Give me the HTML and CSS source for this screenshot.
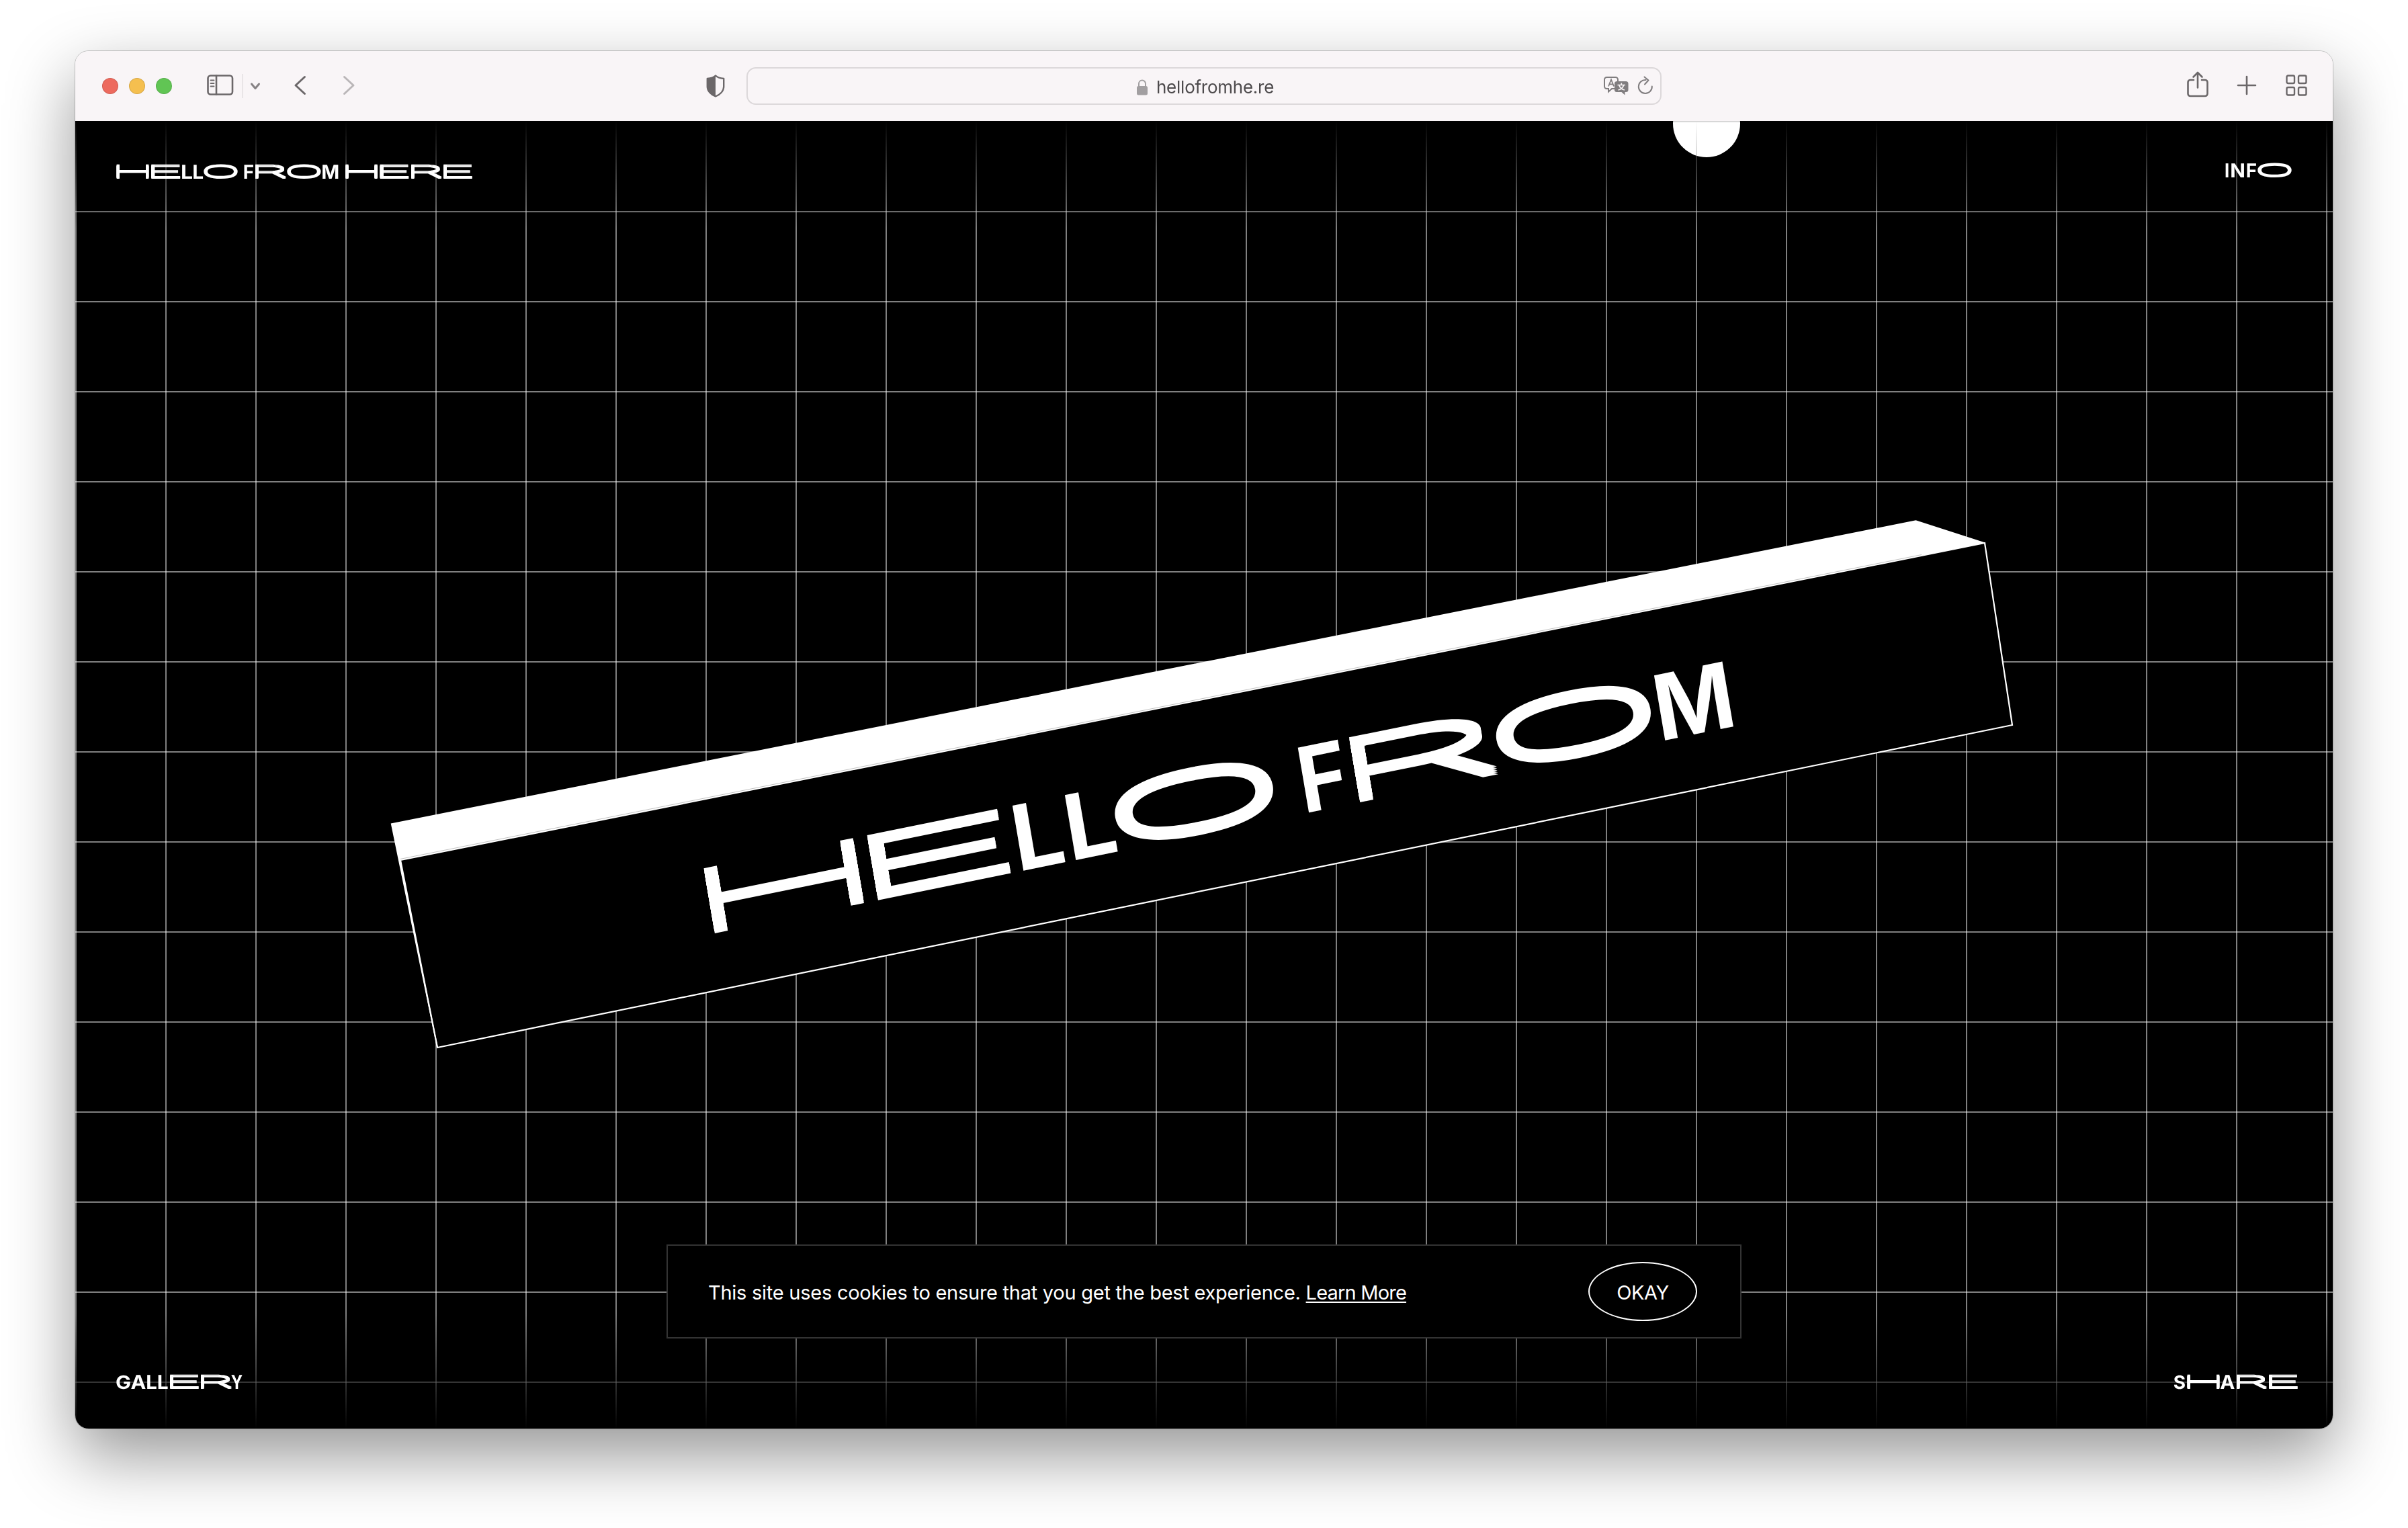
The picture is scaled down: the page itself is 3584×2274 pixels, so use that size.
FILE: index.html
```html
<!DOCTYPE html>
<html lang="en">
<head>
<meta charset="utf-8">
<title>Hello From Here</title>
<link rel="stylesheet" href="styles.css">
</head>
<body>
<div class="window">
  <header class="toolbar">
    <div class="lights"><i class="red"></i><i class="yellow"></i><i class="green"></i></div>
    <svg class="icon sidebar" width="40" height="32" viewBox="0 0 40 32"><rect x="1.5" y="1.5" width="36.5" height="28" rx="4"/><path d="M14 1.500V29.500"/><path class="thin" d="M5.500 8.500h5M5.500 13h5M5.500 17.500h5"/></svg>
    <span class="divider"></span>
    <svg class="icon chevron" width="16" height="12" viewBox="0 0 16 12"><path d="M2.500 3l5.500 6.500L13.500 3"/></svg>
    <svg class="icon back" width="20" height="32" viewBox="0 0 20 32"><path d="M16.500 3.500L3 16l13.500 12.500"/></svg>
    <svg class="icon forward" width="20" height="32" viewBox="0 0 20 32"><path d="M3.500 3.500L17 16 3.500 28.500"/></svg>
    <svg class="icon shield" width="28" height="34" viewBox="0 0 28 34"><path d="M14 1.500C17 4.500 21 5.500 26.200 6v12c0 6-5 11.500-12.200 14.500C6.800 29.500 1.800 24 1.800 18V6C7 5.500 11 4.500 14 1.500z"/><path class="solid" d="M14 1.500v31C6.800 29.500 1.800 24 1.800 18V6C7 5.500 11 4.500 14 1.500z"/></svg>
    <div class="address">
      <div class="site">
        <svg class="lock" width="16" height="24" viewBox="0 0 16 24"><rect x="0" y="10" width="16" height="13.500" rx="2.500" fill="#a29fa1"/><path d="M3 11V6.500a5 5 0 0 1 10 0V11" fill="none" stroke="#a29fa1" stroke-width="2"/></svg>
        <span class="url">hellofromhe.re</span>
      </div>
      <svg class="translate" width="38" height="30" viewBox="0 0 38 30"><path d="M16 19h-4l-5 4.500V19H4.500A3.500 3.500 0 0 1 1 15.500v-10A3.500 3.500 0 0 1 4.500 2h13A3.500 3.500 0 0 1 21 5.500V8" fill="none" stroke="#807d7f" stroke-width="2"/><path d="M7 15.500L11 5.500l4 10M8.300 12.300h5.400" fill="none" stroke="#807d7f" stroke-width="1.800"/><path d="M19 8h14a3.500 3.500 0 0 1 3.500 3.500v9A3.500 3.500 0 0 1 33 24h-1.500v4.500L26.500 24H19a3 3 0 0 1-3-3.500v-9A3.500 3.500 0 0 1 19 8z" fill="#807d7f"/><path d="M26.300 10.500v3M20.500 13.500h11.500M23 14c1 3.500 4 6 8 7M29.500 14c-1 3.500-4 6-8 7" fill="none" stroke="#f9f5f7" stroke-width="1.700"/></svg>
      <svg class="reload" width="24" height="28" viewBox="0 0 24 28"><path d="M12.500 6a10 10 0 1 0 9.300 9.500M10.500 1.500l6 5-5.500 6" fill="none" stroke="#807d7f" stroke-width="2" stroke-linecap="round" stroke-linejoin="round"/></svg>
    </div>
    <svg class="icon share" width="32" height="40" viewBox="0 0 32 40"><path d="M10 13H5a3.500 3.500 0 0 0-3.500 3.500v17A3.500 3.500 0 0 0 5 37h22a3.500 3.500 0 0 0 3.500-3.500v-17A3.500 3.500 0 0 0 27 13h-5M16 24.500V2.500M9.500 8.500L16 2l6.500 6.500"/></svg>
    <svg class="icon plus" width="30" height="30" viewBox="0 0 30 30"><path d="M15 2v26M2 15h26"/></svg>
    <svg class="icon tabs" width="32" height="32" viewBox="0 0 32 32"><rect x="1.500" y="1.500" width="11.500" height="11.500" rx="2"/><rect x="19" y="1.500" width="11.500" height="11.500" rx="2"/><rect x="1.500" y="19" width="11.500" height="11.500" rx="2"/><rect x="19" y="19" width="11.500" height="11.500" rx="2"/></svg>
  </header>

  <main class="page">
    <div class="grid"></div>
    <div class="cursor"></div>

    <svg class="scene" width="3360" height="1946" viewBox="112 180 3360 1946">
      <path d="M596 1280L2954 808 2995 1079 651 1559z" fill="#000"/>
      <path d="M581.700 1225.500L2851.500 774.300 2954.500 807.500 596 1280 652 1559.500 650 1558z" fill="#fff"/>
      <path d="M596 1280L2954 808 2995 1079 651 1559z" fill="none" stroke="#fff" stroke-width="2.200"/>
      <path d="M596 1278.400L2860 825.500" fill="none" stroke="#bbb" stroke-width=".9"/>
      <g class="word" data-cap="98.500" transform="matrix(1 -.203 .168 .99 1063.800 1389)">
        <text class="wide" data-x="0" data-w="221">H</text><text class="wide" data-x="242" data-w="200">E</text><text data-x="459" data-w="63">L</text><text data-x="537" data-w="63">L</text><text class="wide turned" data-x="602.500" data-w="237.500">O</text>
        <text data-x="884" data-w="60">F</text><text class="wide" data-x="960" data-w="206">R</text><text class="wide turned" data-x="1170" data-w="232">O</text><text data-x="1414" data-w="103">M</text>
      </g>
    </svg>

    <div class="row">
      <svg class="label" width="540" height="40" viewBox="172 236 540 40">
        <g class="word" data-cap="21" transform="translate(0 266)">
          <text class="wide" data-x="173.700" data-w="47.300">H</text><text class="wide" data-x="225" data-w="43.400">E</text><text data-x="271" data-w="15">L</text><text data-x="288" data-w="14">L</text><text class="wide turned" data-x="302.500" data-w="51">O</text>
          <text data-x="363.500" data-w="13.500">F</text><text class="wide" data-x="380" data-w="46">R</text><text class="wide turned" data-x="426.500" data-w="50.800">O</text><text data-x="480" data-w="23.500">M</text>
          <text class="wide" data-x="514.500" data-w="47">H</text><text class="wide" data-x="565.500" data-w="43">E</text><text class="wide" data-x="612" data-w="45.500">R</text><text class="wide" data-x="660" data-w="43">E</text>
        </g>
      </svg>
      <svg class="label" width="102" height="40" viewBox="3310 236 102 40">
        <g class="word" data-cap="21" transform="translate(0 264)">
          <text data-x="3312.500" data-w="4">I</text><text data-x="3321" data-w="19">N</text><text data-x="3344.500" data-w="13.500">F</text><text class="wide turned" data-x="3359.500" data-w="51">O</text>
        </g>
      </svg>
    </div>
    <div class="row">
      <svg class="label" width="192" height="40" viewBox="172 2036 192 40">
        <g class="word" data-cap="21" transform="translate(0 2067)">
          <text data-x="173" data-w="20.700">G</text><text data-x="195" data-w="22">A</text><text data-x="219" data-w="13.700">L</text><text data-x="235.700" data-w="14">L</text><text class="wide" data-x="253" data-w="43">E</text><text class="wide" data-x="299" data-w="46">R</text><text data-x="344" data-w="16.700">Y</text>
        </g>
      </svg>
      <svg class="label share-link" width="188" height="40" viewBox="3234 2036 188 40">
        <g class="word" data-cap="21" transform="translate(0 2067)">
          <text data-x="3235.700" data-w="16.600">S</text><text class="wide" data-x="3255.700" data-w="47.300">H</text><text data-x="3304.700" data-w="21.300">A</text><text class="wide" data-x="3329" data-w="45">R</text><text class="wide" data-x="3377" data-w="43">E</text>
        </g>
      </svg>
    </div>

    <div class="cookies">
      <p><span class="msg">This site uses cookies to ensure that you get the best experience.</span> <a>Learn More</a></p>
      <button>OKAY</button>
    </div>
  </main>
</div>
<script src="letters.js"></script>
</body>
</html>
```
FILE: letters.js
```js
// Fits the ink of each display letter to its column width and the cap height.
// Wide letters use a light weight, thickened up and down so their bars match the stems.
// The wide O is a narrow O turned on its side, which keeps its long edges flat.
const ctx = document.createElement('canvas').getContext('2d');
document.querySelectorAll('.word').forEach(word => {
  const cap = +word.dataset.cap;
  word.querySelectorAll('text').forEach(t => {
    const wide = t.classList.contains('wide');
    const turned = t.classList.contains('turned');
    const grow = wide && !turned ? cap * 0.06 : 0;
    const style = getComputedStyle(t);
    // Measured at ten times the drawn size, so that whole-pixel rounding is negligible.
    ctx.font = style.fontWeight + ' 1000px ' + style.fontFamily;
    const m = ctx.measureText(t.textContent);
    const l = -m.actualBoundingBoxLeft / 10, r = m.actualBoundingBoxRight / 10;
    const a = m.actualBoundingBoxAscent / 10, d = m.actualBoundingBoxDescent / 10;
    const x = +t.dataset.x, w = +t.dataset.w, h = turned ? cap * 1.06 : cap - 2 * grow;
    const cx = (l + r) / 2, cy = (d - a) / 2;
    const iw = turned ? a + d : r - l, ih = turned ? r - l : a + d;
    const sx = w / iw * (grow ? 1.042 : 1);
    t.setAttribute('transform',
      `translate(${x + w / 2} ${-cap / 2}) scale(${sx} ${h / ih}) ${turned ? 'rotate(90)' : ''} translate(${-cx} ${-cy})`);
    if (grow) {
      t.style.textShadow = [-1, -0.5, 0.5, 1]
        .map(k => `0 ${(k * grow * ih / h).toFixed(2)}px 0 #fff`).join(',');
    }
  });
});
```
FILE: styles.css
```css
* { box-sizing: border-box; }
body { margin: 0; width: 3584px; height: 2274px; padding: 76px 112px 0; background: #fff; overflow: hidden; font-family: Inter, "Liberation Sans", sans-serif; }
.window { width: 3360px; height: 2050px; border-radius: 20px; box-shadow: 0 0 0 1px rgba(0,0,0,.2), 0 40px 100px rgba(0,0,0,.42); display: flex; flex-direction: column; }

.toolbar { height: 104px; flex: none; display: flex; align-items: center; background: #f9f5f7; border-radius: 20px 20px 0 0; padding-left: 40px; }
.lights { display: flex; gap: 16px; width: 156px; }
.lights i { width: 24px; height: 24px; border-radius: 50%; border: 1px solid rgba(0,0,0,.12); }
.red { background: #ed6a5e; }
.yellow { background: #f5bf4f; }
.green { background: #61c554; }
.icon { flex: none; fill: none; stroke: #6b6769; stroke-width: 2.6; stroke-linecap: round; stroke-linejoin: round; }
.icon .thin { stroke-width: 1.8; }
.icon .solid { fill: #6b6769; stroke: none; }
.sidebar { margin-top: -2px; }
.divider { width: 2px; height: 36px; margin-left: 12px; background: #e9e5e7; }
.chevron { margin-left: 10px; stroke: #868284; stroke-width: 3; }
.back { margin-left: 49px; margin-top: -2px; stroke-width: 3; }
.forward { margin-left: 52px; margin-top: -2px; stroke: #bab6b8; stroke-width: 3; }
.shield { margin-left: 522px; stroke-width: 2.4; }
.address { display: flex; align-items: center; width: 1362px; height: 56px; margin-left: 32px; border: 2px solid #dcd8da; border-radius: 14px; }
.site { display: flex; align-items: center; margin-left: 579px; width: 695px; gap: 13px; padding-top: 3px; }
.url { font-size: 26px; line-height: 32px; color: #4d4a4c; letter-spacing: -.25px; }
.reload { margin-left: 12px; margin-top: -2px; }
.share { margin-left: 782px; margin-top: -4px; }
.plus { margin-left: 42px; margin-top: -2px; }
.tabs { margin-left: 43px; margin-top: -2px; stroke-width: 2.4; }

.page { position: relative; flex: 1; display: flex; flex-direction: column; justify-content: space-between; background: #000; overflow: hidden; border-radius: 0 0 20px 20px; padding: 56px 60px 50px; color: #fff; }
.grid { position: absolute; inset: 0; background: linear-gradient(rgba(255,255,255,.5) 2px, transparent 2px) 0 0 / 134px 134px, linear-gradient(90deg, rgba(255,255,255,.5) 2px, transparent 2px) 0 0 / 134px 134px; -webkit-mask-image: linear-gradient(transparent, #000 160px, #000 1776px, transparent); mask-image: linear-gradient(transparent, #000 160px, #000 1776px, transparent); }
.cursor { position: absolute; left: 2378px; top: -46px; width: 100px; height: 100px; border-radius: 50%; background: linear-gradient(#fff 46px, #d8d8d8 46px, #d8d8d8 48px, #fff 48px); mix-blend-mode: difference; }
.scene { position: absolute; left: 0; top: 0; }
.row { position: relative; display: flex; justify-content: space-between; }
.label { overflow: visible; }
.share-link { margin-right: -10px; }
.word text { font-family: Inter, sans-serif; font-size: 100px; font-weight: 650; fill: #fff; text-rendering: geometricPrecision; }
.word text.wide { font-weight: 200; }
.word text.turned { font-family: "Liberation Mono", monospace; font-weight: 400; }

.cookies { position: absolute; left: 880px; bottom: 134px; width: 1600px; height: 140px; display: flex; align-items: center; justify-content: space-between; padding: 0 64px 0 60px; background: #000; border: 2px solid #333; font-size: 29px; }
.cookies p { margin: 3px 0 0; white-space: nowrap; line-height: 40px; letter-spacing: -.26px; }
.cookies a { letter-spacing: -.8px; text-decoration: underline; text-decoration-thickness: 2px; text-underline-offset: 3px; }
.cookies button { width: 162px; height: 88px; padding: 2px 0 0; border: 2px solid #fff; border-radius: 50%; background: #000; color: #fff; font: 29px Inter, sans-serif; letter-spacing: -.4px; }
```
